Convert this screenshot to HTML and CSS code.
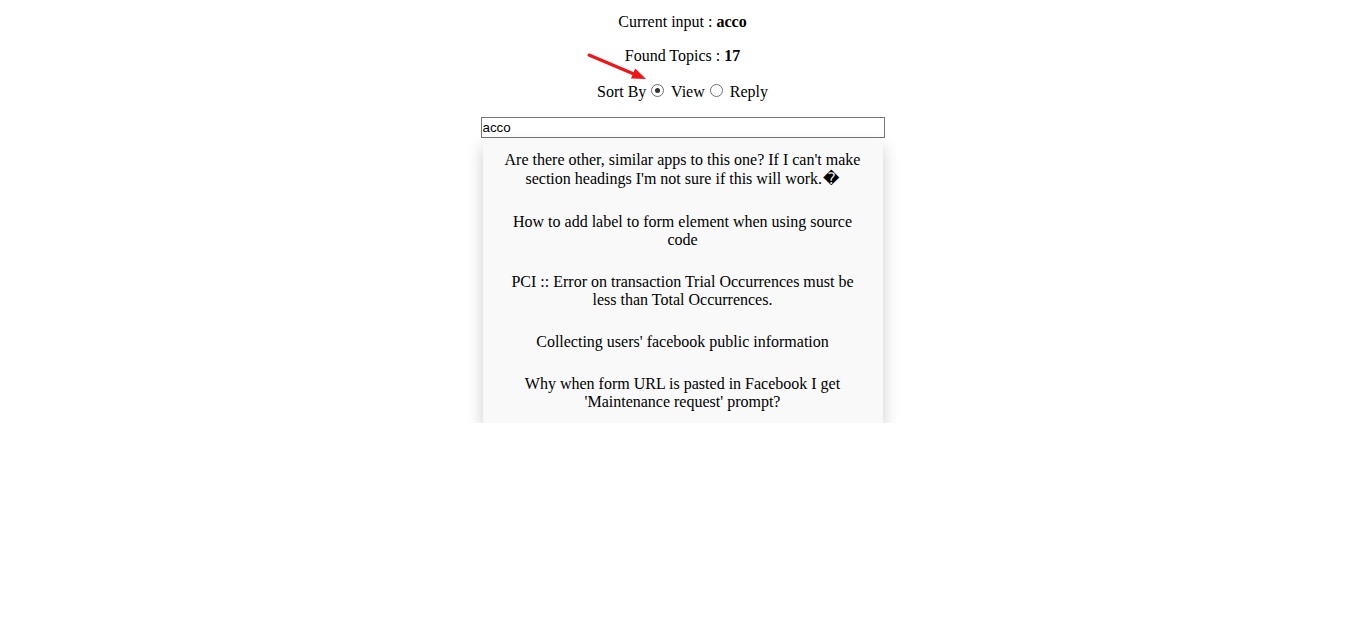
FILE: index.html
```html
<!DOCTYPE html>
<html lang="en">
<head>
<meta charset="utf-8">
<title>Topic search</title>
<link rel="stylesheet" href="styles.css">
</head>
<body>
<div class="main">
  <p class="line">Current input : <b>acco</b></p>
  <p class="line">Found Topics : <b>17</b></p>
  <p class="line sort">Sort By<input class="radio" type="radio" name="sort" checked> View<input class="radio" type="radio" name="sort"> Reply</p>
  <div class="search">
    <input class="search-input" type="text" value="acco">
    <div class="dropdown">
      <div class="item">Are there other, similar apps to this one? If I can't make section headings I'm not sure if this will work.<span class="rep">&#xFFFD;</span></div>
      <div class="item">How to add label to form element when using source code</div>
      <div class="item">PCI :: Error on transaction Trial Occurrences must be less than Total Occurrences.</div>
      <div class="item">Collecting users' facebook public information</div>
      <div class="item">Why when form URL is pasted in Facebook I get 'Maintenance request' prompt?</div>
    </div>
  </div>
</div>
<svg class="arrow" width="80" height="40" viewBox="0 0 80 40">
  <line x1="9" y1="10" x2="55" y2="29.5" stroke="#f01414" stroke-width="3" stroke-linecap="round"/>
  <polygon points="66,34 51,33.5 55.2,23.5" fill="#f01414"/>
</svg>
</body>
</html>
```

FILE: styles.css
```css
html, body {
  margin: 0;
  padding: 0;
  background: #ffffff;
}

body {
  position: relative;
  font-family: "Liberation Serif", "Times New Roman", serif;
  font-size: 16px;
  color: #000;
}

.main {
  padding-top: 13px;
  text-align: center;
}

.line {
  margin: 0 0 16px;
}

.radio {
  -webkit-appearance: none;
  appearance: none;
  box-sizing: border-box;
  width: 13px;
  height: 13px;
  margin: 3px 3px 0 5px;
  border: 1px solid #6f6f6f;
  border-radius: 50%;
  background: #fff;
  vertical-align: baseline;
  position: relative;
}

.radio:checked::after {
  content: "";
  position: absolute;
  left: 3px;
  top: 3px;
  width: 5px;
  height: 5px;
  border-radius: 50%;
  background: #333;
}

.search {
  display: flex;
  flex-direction: column;
  align-items: center;
}

.search-input {
  box-sizing: border-box;
  width: 404px;
  height: 21px;
  margin: 0;
  padding: 1px 1px;
  border: 1px solid #767676;
  border-radius: 0;
  font-family: "Liberation Sans", Arial, sans-serif;
  font-size: 13.333px;
  color: #000;
  outline: none;
}

.dropdown {
  width: 400px;
  margin-top: 1px;
  background: #f9f9f9;
  box-shadow: 0 8px 16px 0 rgba(0, 0, 0, 0.2);
}

.item {
  padding: 12px 16px;
  text-align: center;
}

.rep {
  font-family: "DejaVu Sans", sans-serif;
  line-height: 20px;
  padding-left: 1px;
}

.arrow {
  position: absolute;
  left: 580px;
  top: 45px;
}
```
